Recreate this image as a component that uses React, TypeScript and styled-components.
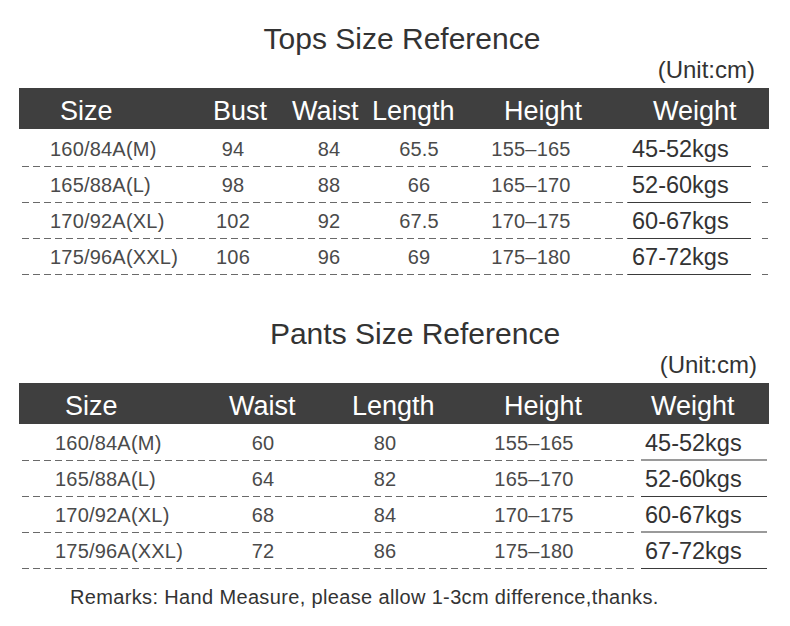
import React from "react";
import styled, { createGlobalStyle } from "styled-components";

const GlobalStyle = createGlobalStyle`
  body {
    margin: 0;
    background: #fff;
    font-family: "Liberation Sans", Arial, sans-serif;
  }
`;

const Page = styled.div`
  width: 790px;
  height: 626px;
  box-sizing: border-box;
  padding-top: 22px;
  background: #fff;
  color: #333;
`;

const Section = styled.section<{ $top: number }>`
  margin-top: ${p => p.$top}px;
`;

const Title = styled.h2<{ $shift: number }>`
  margin: 0;
  padding-left: ${p => p.$shift * 2}px;
  font-size: 30px;
  font-weight: normal;
  line-height: 34px;
  text-align: center;
  color: #333;
`;

const Unit = styled.div<{ $right: number }>`
  padding-right: ${p => p.$right}px;
  font-size: 24px;
  line-height: 28px;
  text-align: right;
  color: #333;
`;

const Table = styled.div`
  width: 750px;
  margin: 4px 0 0 19px;
`;

const HeaderBar = styled.div<{ $pad: number; $cols: string }>`
  display: grid;
  grid-template-columns: ${p => p.$cols};
  height: 41px;
  padding-left: ${p => p.$pad}px;
  background: #3f3f3f;
  color: #fff;
`;

const HeadCell = styled.div`
  padding-top: 6px;
  font-size: 27px;
  line-height: 35px;
  white-space: nowrap;
`;

const Body = styled.div<{ $top: number }>`
  padding-top: ${p => p.$top}px;
`;

const Row = styled.div`
  display: flex;
  height: 36px;
`;

const DashedPart = styled.div<{ $width: number; $cols: string }>`
  display: grid;
  grid-template-columns: ${p => p.$cols};
  width: ${p => p.$width}px;
  margin-left: 3px;
  background-image: linear-gradient(to right, #6a6a6a 7px, transparent 7px);
  background-size: 11px 1px;
  background-repeat: repeat-x;
  background-position: left bottom;
`;

const Cell = styled.div<{ $pad?: number }>`
  padding-left: ${p => p.$pad ?? 0}px;
  text-align: ${p => (p.$pad !== undefined ? "left" : "center")};
  font-size: 20px;
  line-height: 36px;
  letter-spacing: 0.2px;
  color: #4a4a4a;
  white-space: nowrap;
`;

const WeightCell = styled.div<{ $width: number; $gap: number; $line: string; $thick: number }>`
  width: ${p => p.$width}px;
  margin-left: ${p => p.$gap}px;
  padding-left: 4px;
  box-sizing: border-box;
  box-shadow: inset 0 -${p => p.$thick}px 0 ${p => p.$line};
  font-size: 23.5px;
  line-height: 36px;
  color: #333;
  white-space: nowrap;
`;

const Tail = styled.div`
  flex: 1;
  background-image: linear-gradient(to left, transparent 1px, #6a6a6a 1px, #6a6a6a 7px, transparent 7px);
  background-size: 100% 1px;
  background-repeat: no-repeat;
  background-position: left bottom;
`;

const Remarks = styled.p`
  margin: 16px 0 0 70px;
  font-size: 20px;
  line-height: 24px;
  letter-spacing: 0.35px;
  color: #333;
`;

type Line = { color: string; thick: number };

type Spec = {
  title: string;
  shift: number;
  unitRight: number;
  top: number;
  headPad: number;
  headCols: string;
  heads: string[];
  bodyTop: number;
  dashWidth: number;
  dataCols: string;
  sizePad: number;
  weightWidth: number;
  weightGap: number;
  tail: boolean;
  lines: Line[];
  rows: string[][];
};

const dark: Line = { color: "#3a3a3a", thick: 1 };
const grey: Line = { color: "#9a9a9a", thick: 2 };

const tops: Spec = {
  title: "Tops Size Reference",
  shift: 7,
  unitRight: 35,
  top: 0,
  headPad: 41,
  headCols: "153px 79px 80px 132px 149px 1fr",
  heads: ["Size", "Bust", "Waist", "Length", "Height", "Weight"],
  bodyTop: 2,
  dashWidth: 606,
  dataCols: "168px 86px 106px 74px 150px 1fr",
  sizePad: 28,
  weightWidth: 123,
  weightGap: 0,
  tail: true,
  lines: [dark, dark, dark, dark],
  rows: [
    ["160/84A(M)", "94", "84", "65.5", "155–165", "45-52kgs"],
    ["165/88A(L)", "98", "88", "66", "165–170", "52-60kgs"],
    ["170/92A(XL)", "102", "92", "67.5", "170–175", "60-67kgs"],
    ["175/96A(XXL)", "106", "96", "69", "175–180", "67-72kgs"],
  ],
};

const pants: Spec = {
  title: "Pants Size Reference",
  shift: 20,
  unitRight: 33,
  top: 42,
  headPad: 46,
  headCols: "164px 123px 152px 147px 1fr",
  heads: ["Size", "Waist", "Length", "Height", "Weight"],
  bodyTop: 1,
  dashWidth: 616,
  dataCols: "178px 126px 118px 180px 1fr",
  sizePad: 33,
  weightWidth: 126,
  weightGap: 3,
  tail: false,
  lines: [grey, dark, grey, dark],
  rows: [
    ["160/84A(M)", "60", "80", "155–165", "45-52kgs"],
    ["165/88A(L)", "64", "82", "165–170", "52-60kgs"],
    ["170/92A(XL)", "68", "84", "170–175", "60-67kgs"],
    ["175/96A(XXL)", "72", "86", "175–180", "67-72kgs"],
  ],
};

function SizeTable({ spec }: { spec: Spec }) {
  return (
    <Section $top={spec.top}>
      <Title $shift={spec.shift}>{spec.title}</Title>
      <Unit $right={spec.unitRight}>(Unit:cm)</Unit>
      <Table>
        <HeaderBar $pad={spec.headPad} $cols={spec.headCols}>
          {spec.heads.map(h => (
            <HeadCell key={h}>{h}</HeadCell>
          ))}
        </HeaderBar>
        <Body $top={spec.bodyTop}>
          {spec.rows.map((row, i) => {
            const weight = row[row.length - 1];
            const cells = row.slice(0, -1);
            const line = spec.lines[i];
            return (
              <Row key={row[0]}>
                <DashedPart $width={spec.dashWidth} $cols={spec.dataCols}>
                  {cells.map((c, j) =>
                    j === 0 ? (
                      <Cell key={j} $pad={spec.sizePad}>{c}</Cell>
                    ) : (
                      <Cell key={j}>{c}</Cell>
                    )
                  )}
                </DashedPart>
                <WeightCell
                  $width={spec.weightWidth}
                  $gap={spec.weightGap}
                  $line={line.color}
                  $thick={line.thick}
                >
                  {weight}
                </WeightCell>
                {spec.tail && <Tail />}
              </Row>
            );
          })}
        </Body>
      </Table>
    </Section>
  );
}

export default function App() {
  return (
    <>
      <GlobalStyle />
      <Page>
        <SizeTable spec={tops} />
        <SizeTable spec={pants} />
        <Remarks>Remarks: Hand Measure, please allow 1-3cm difference,thanks.</Remarks>
      </Page>
    </>
  );
}
